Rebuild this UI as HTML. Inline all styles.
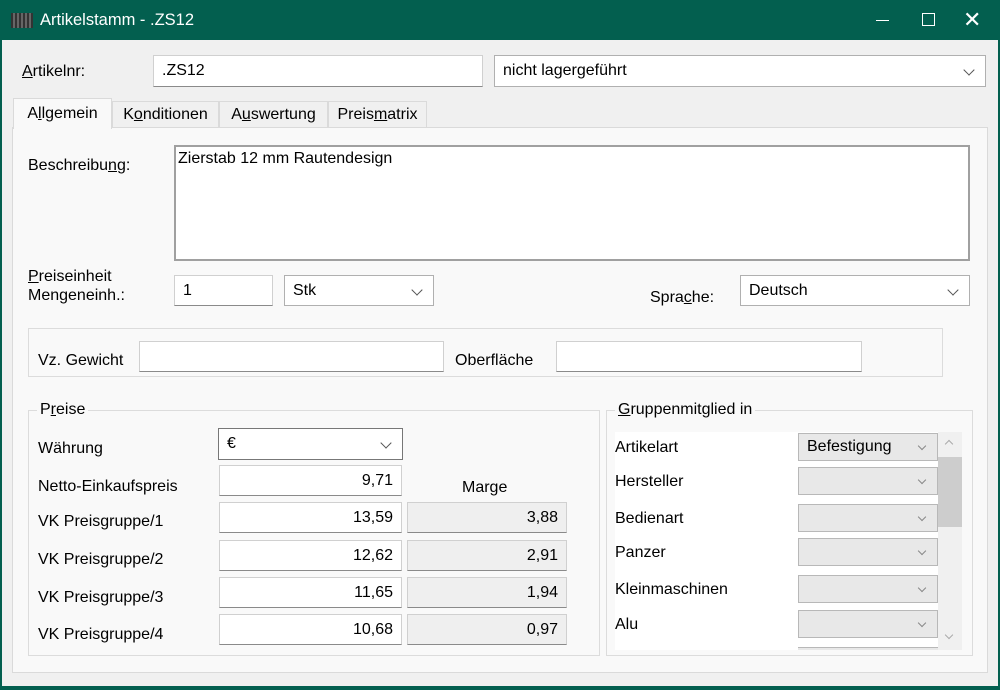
<!DOCTYPE html><html><head><meta charset="utf-8"><style>
*{box-sizing:border-box}
body{margin:0;width:1000px;height:690px;overflow:hidden;background:#f0f0f0;font-family:"Liberation Sans","DejaVu Sans",sans-serif;font-size:16px;color:#000;position:relative}
.a{position:absolute}
.tb{left:0;top:0;width:1000px;height:40px;background:#035f4f;color:#fff}
.in{position:absolute;background:#fff;border:1px solid #d0d0d0;border-bottom:1px solid #8a8a8a;padding:0 8px;line-height:29px;height:31px}
.r{text-align:right}
.g{background:#efefef}
.sel{position:absolute;background:#fff;border:1px solid #b0b0b0;padding:0 8px;line-height:29px;height:31px}
.sel:after{content:"";position:absolute;right:12px;top:10px;width:7px;height:7px;border-right:1.3px solid #555;border-bottom:1.3px solid #555;transform:rotate(45deg)}
.tab{position:absolute;top:101px;height:27px;background:#f0f0f0;border:1px solid #dadada;line-height:26px;text-align:center}
.gb{position:absolute;border:1px solid #dcdcdc}
.lg{position:absolute;background:#f9f9f9;padding:0 3px}
.cb{position:absolute;left:798px;width:140px;height:28px;background:#e8e8e8;border:1px solid #b8b8b8;padding-left:8px;line-height:26px}
.cb:after{content:"";position:absolute;right:12px;top:9px;width:5px;height:5px;border-right:1.2px solid #888;border-bottom:1.2px solid #888;transform:rotate(45deg)}
u{text-decoration:underline}
</style></head><body>
<div class="a tb">
 <div class="a" style="left:11px;top:13px;width:22px;height:15px;background:repeating-linear-gradient(90deg,#333 0 2px,#666 2px 4px)"></div>
 <div class="a" style="left:40px;top:11px;font-size:16.5px">Artikelstamm - .ZS12</div>
 <div class="a" style="left:876px;top:20px;width:13px;height:1px;background:#fff"></div>
 <div class="a" style="left:922px;top:13px;width:13px;height:13px;border:1.3px solid #fff"></div>
 <div class="a" style="left:963px;top:9px;font-size:22px;line-height:22px">✕</div>
</div>
<div class="a" style="left:0;top:40px;width:2px;height:650px;background:#035f4f"></div>
<div class="a" style="left:998px;top:40px;width:2px;height:650px;background:#035f4f"></div>
<div class="a" style="left:0;top:686px;width:1000px;height:4px;background:#035f4f"></div>

<div class="a" style="left:22px;top:63px"><u>A</u>rtikelnr:</div>
<div class="in" style="left:153px;top:55px;width:330px;height:32px;line-height:30px">.ZS12</div>
<div class="sel" style="left:494px;top:55px;width:492px;height:32px;line-height:30px">nicht lagergeführt</div>

<div class="a" style="left:12px;top:127px;width:976px;height:546px;background:#f9f9f9;border:1px solid #dadada"></div>
<div class="tab" style="left:13px;top:98px;height:31px;width:99px;background:#f9f9f9;border-bottom:none;line-height:30px">A<u>l</u>lgemein</div>
<div class="tab" style="left:112px;width:107px">K<u>o</u>nditionen</div>
<div class="tab" style="left:219px;width:109px">A<u>u</u>swertung</div>
<div class="tab" style="left:328px;width:99px">Preis<u>m</u>atrix</div>

<div class="a" style="left:28px;top:157px">Beschreibu<u>n</u>g:</div>
<div class="a" style="left:174px;top:145px;width:796px;height:116px;background:#fff;border:2px solid #a0a0a0;padding:3px 2px">Zierstab 12 mm Rautendesign</div>

<div class="a" style="left:28px;top:267px;line-height:19px"><u>P</u>reiseinheit<br>Mengeneinh.:</div>
<div class="in" style="left:174px;top:275px;width:99px">1</div>
<div class="sel" style="left:284px;top:275px;width:150px">Stk</div>
<div class="a" style="left:650px;top:289px">Spra<u>c</u>he:</div>
<div class="sel" style="left:740px;top:275px;width:230px">Deutsch</div>

<div class="gb" style="left:28px;top:328px;width:915px;height:49px"></div>
<div class="a" style="left:38px;top:352px">Vz. Gewicht</div>
<div class="in" style="left:139px;top:341px;width:305px"></div>
<div class="a" style="left:455px;top:352px">Oberfläche</div>
<div class="in" style="left:556px;top:341px;width:306px"></div>

<div class="gb" style="left:28px;top:410px;width:572px;height:246px"></div>
<div class="lg" style="left:37px;top:401px">P<u>r</u>eise</div>
<div class="a" style="left:38px;top:440px">Währung</div>
<div class="sel" style="left:218px;top:428px;width:185px;height:32px;border-color:#777">€</div>
<div class="a" style="left:38px;top:478px">Netto-Einkaufspreis</div>
<div class="in r" style="left:219px;top:465px;width:183px">9,71</div>
<div class="a" style="left:462px;top:479px">Marge</div>
<div class="a" style="left:38px;top:513px">VK Preisgruppe/1</div>
<div class="in r" style="left:219px;top:502px;width:183px">13,59</div>
<div class="in r g" style="left:407px;top:502px;width:160px">3,88</div>
<div class="a" style="left:38px;top:551px">VK Preisgruppe/2</div>
<div class="in r" style="left:219px;top:540px;width:183px">12,62</div>
<div class="in r g" style="left:407px;top:540px;width:160px">2,91</div>
<div class="a" style="left:38px;top:589px">VK Preisgruppe/3</div>
<div class="in r" style="left:219px;top:577px;width:183px">11,65</div>
<div class="in r g" style="left:407px;top:577px;width:160px">1,94</div>
<div class="a" style="left:38px;top:626px">VK Preisgruppe/4</div>
<div class="in r" style="left:219px;top:614px;width:183px">10,68</div>
<div class="in r g" style="left:407px;top:614px;width:160px">0,97</div>

<div class="gb" style="left:606px;top:410px;width:367px;height:246px"></div>
<div class="lg" style="left:615px;top:401px"><u>G</u>ruppenmitglied in</div>
<div class="a" style="left:615px;top:432px;width:323px;height:218px;background:#fff;overflow:hidden">
</div>
<div class="a" style="left:938px;top:432px;width:24px;height:218px;background:#f0f0f0"></div>
<div class="a" style="left:938px;top:457px;width:24px;height:70px;background:#cdcdcd"></div>
<div class="a" style="left:946px;top:441px;width:6px;height:6px;border-left:1px solid #aaa;border-top:1px solid #aaa;transform:rotate(45deg)"></div>
<div class="a" style="left:946px;top:632px;width:6px;height:6px;border-right:1px solid #aaa;border-bottom:1px solid #aaa;transform:rotate(45deg)"></div>
<div class="a" style="left:615px;top:439px">Artikelart</div>
<div class="cb" style="top:433px">Befestigung</div>
<div class="a" style="left:615px;top:473px">Hersteller</div>
<div class="cb" style="top:467px"></div>
<div class="a" style="left:615px;top:510px">Bedienart</div>
<div class="cb" style="top:504px"></div>
<div class="a" style="left:615px;top:544px">Panzer</div>
<div class="cb" style="top:538px"></div>
<div class="a" style="left:615px;top:581px">Kleinmaschinen</div>
<div class="cb" style="top:575px"></div>
<div class="a" style="left:615px;top:616px">Alu</div>
<div class="cb" style="top:610px"></div>
<div class="a" style="left:798px;top:647px;width:140px;height:3px;border-top:1px solid #b8b8b8;background:#e8e8e8"></div>
</body></html>
